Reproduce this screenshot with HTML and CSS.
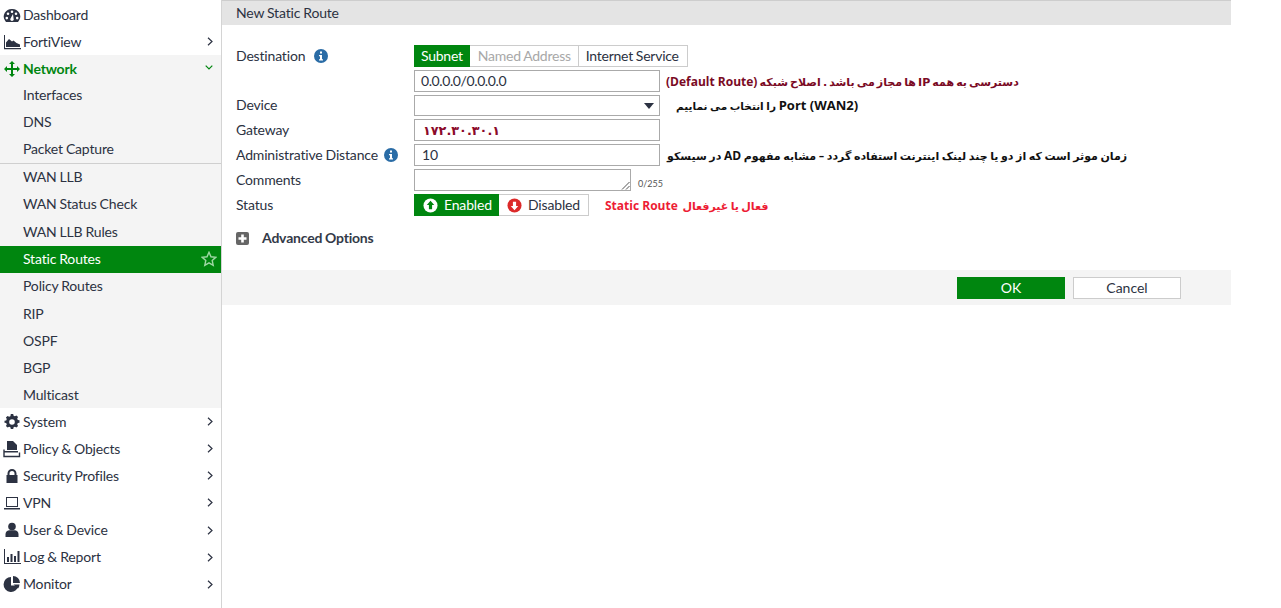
FILE: index.html
```html
<!DOCTYPE html>
<html lang="en">
<head>
<meta charset="utf-8">
<title>New Static Route</title>
<link rel="stylesheet" href="styles.css">
</head>
<body>
<div class="app">
  <nav class="sidebar">
    <a class="item"><svg class="ico" viewBox="0 0 18 18"><path fill-rule="evenodd" d="M9 3a8 7.500 0 0 0-7 11.500L3 16h12l1-1.500A8 7.500 0 0 0 9 3zM5 6.500a1.300 1.300 0 1 1 0 2.600 1.300 1.300 0 0 1 0-2.600zM9 4.500a1.300 1.300 0 1 1 0 2.600 1.300 1.300 0 0 1 0-2.600zm4 2a1.300 1.300 0 1 1 0 2.600 1.300 1.300 0 0 1 0-2.600zM3.800 10.800a1.300 1.300 0 1 1 0 2.600 1.300 1.300 0 0 1 0-2.600zm10.400 0a1.300 1.300 0 1 1 0 2.600 1.300 1.300 0 0 1 0-2.600zM10 8l.6 4.800a1.700 1.700 0 1 1-3.200 0z"/></svg>Dashboard</a>
    <a class="item"><svg class="ico" viewBox="0 0 18 18"><path d="M1 2h1v13h16v1.200H1z"/><path d="M3 14V9.500l3-3.500 3 2.500 1.500-1 3 2.500 3.500 1.500v2.500z"/></svg>FortiView<svg class="chev" viewBox="0 0 6 9"><path d="M1 .7L5 4.500 1 8.300"/></svg></a>
    <div class="group">
      <a class="item head"><svg class="ico" viewBox="0 0 18 18"><path d="M9 1l3 3h-2v4h4V6l3 3-3 3v-2h-4v4h2l-3 3-3-3h2v-4H4v2L1 9l3-3v2h4V4H6z"/></svg>Network<svg class="chev down" viewBox="0 0 8 5"><path d="M.7 .7L4 4l3.300-3.300"/></svg></a>
      <a class="item sub">Interfaces</a>
      <a class="item sub">DNS</a>
      <a class="item sub last">Packet Capture</a>
      <div class="divider"></div>
      <a class="item sub">WAN LLB</a>
      <a class="item sub">WAN Status Check</a>
      <a class="item sub pre">WAN LLB Rules</a>
      <a class="item sub active">Static Routes<svg class="star" viewBox="0 0 16 16"><path d="M8 1.300l2 4.500 4.800.5-3.600 3.200 1 4.800L8 11.900l-4.200 2.400 1-4.800L1.200 6.300 6 5.800z"/></svg></a>
      <a class="item sub pre">Policy Routes</a>
      <a class="item sub">RIP</a>
      <a class="item sub">OSPF</a>
      <a class="item sub">BGP</a>
      <a class="item sub short">Multicast</a>
    </div>
    <a class="item"><svg class="ico" viewBox="0 0 18 18"><path fill-rule="evenodd" d="M7.800 2.500h2.400l.4 1.700 1.300.6 1.500-.9 1.700 1.700-.9 1.500.6 1.300 1.700.4v2.400l-1.700.4-.6 1.300.9 1.500-1.700 1.700-1.500-.9-1.300.6-.4 1.700H7.800l-.4-1.700-1.300-.6-1.500.9-1.700-1.700.9-1.500-.6-1.300-1.700-.4V9.300l1.700-.4.6-1.300-.9-1.500 1.700-1.700 1.500.9 1.300-.6zM9 7.700a2.800 2.800 0 1 0 0 5.600 2.800 2.800 0 0 0 0-5.600z" transform="translate(0 -1.500)"/></svg>System<svg class="chev" viewBox="0 0 6 9"><path d="M1 .7L5 4.500 1 8.300"/></svg></a>
    <a class="item"><svg class="ico" viewBox="0 0 18 18"><path d="M4 1h6l4 4v5H4z"/><path fill="none" stroke="currentColor" stroke-width="1.400" d="M1 9.500v7h15.500v-4"/><path d="M1 11h14v1.500H1z"/></svg>Policy &amp; Objects<svg class="chev" viewBox="0 0 6 9"><path d="M1 .7L5 4.500 1 8.300"/></svg></a>
    <a class="item"><svg class="ico" viewBox="0 0 18 18"><path fill-rule="evenodd" d="M9 2a4.500 4.500 0 0 0-4.500 4.500V8H3.500v8h11V8h-1V6.500A4.500 4.500 0 0 0 9 2zm0 2a2.500 2.500 0 0 1 2.500 2.500V8h-5V6.500A2.500 2.500 0 0 1 9 4z"/></svg>Security Profiles<svg class="chev" viewBox="0 0 6 9"><path d="M1 .7L5 4.500 1 8.300"/></svg></a>
    <a class="item"><svg class="ico" viewBox="0 0 18 18"><path fill-rule="evenodd" d="M3 3h12v10H3zm1 1v8h10V4zM1 14h16v1.500H1z"/></svg>VPN<svg class="chev" viewBox="0 0 6 9"><path d="M1 .7L5 4.500 1 8.300"/></svg></a>
    <a class="item"><svg class="ico" viewBox="0 0 18 18"><circle cx="9" cy="5.500" r="3.800"/><path d="M2.500 16v-3c0-2.500 2-3.800 4-3.800h5c2 0 4 1.300 4 3.800v3z"/></svg>User &amp; Device<svg class="chev" viewBox="0 0 6 9"><path d="M1 .7L5 4.500 1 8.300"/></svg></a>
    <a class="item"><svg class="ico" viewBox="0 0 18 18"><path d="M1 1h1v14h16v1H1zM4 9h2v5H4zM7.500 6h2v8h-2zM11 8h2v6h-2zM14.500 3h2v11h-2z"/></svg>Log &amp; Report<svg class="chev" viewBox="0 0 6 9"><path d="M1 .7L5 4.500 1 8.300"/></svg></a>
    <a class="item"><svg class="ico" viewBox="0 0 18 18"><path d="M8 2a7.500 7.500 0 1 0 7.500 8.500H8z"/><path d="M10 1a7 7 0 0 1 7 7h-7z"/><path d="M10.500 9.500h6a7 7 0 0 1-1.500 4z"/></svg>Monitor<svg class="chev" viewBox="0 0 6 9"><path d="M1 .7L5 4.500 1 8.300"/></svg></a>
  </nav>
  <main class="main">
    <header class="title">New Static Route</header>
    <form class="form">
      <div class="row">
        <div class="label">Destination<svg class="info gap1" viewBox="0 0 14 14"><circle cx="7" cy="7" r="7"/><path class="i" d="M6 2.500h2v2H6zM5 6h3v4.200h1v1.300H5v-1.300h1V7.300H5z"/></svg></div>
        <div class="tabs"><span class="tab on">Subnet</span><span class="tab dim">Named Address</span><span class="tab svc">Internet Service</span></div>
      </div>
      <div class="row">
        <div class="label"></div>
        <div class="input addr">0.0.0.0/0.0.0.0</div>
        <div class="note n1" dir="rtl">دسترسی به همه IP ها مجاز می باشد . اصلاح شبکه <span class="lat">(Default Route)</span></div>
      </div>
      <div class="row device">
        <div class="label">Device</div>
        <div class="input select"><svg class="caret" viewBox="0 0 10 6"><path d="M0 0h10L5 6z"/></svg></div>
        <div class="note n2" dir="rtl"><span class="lat big">Port (WAN2)</span> را انتخاب می نماییم</div>
      </div>
      <div class="row">
        <div class="label">Gateway</div>
        <div class="input gw">۱۷۲.۳۰.۳۰.۱</div>
      </div>
      <div class="row">
        <div class="label">Administrative Distance<svg class="info gap2" viewBox="0 0 14 14"><circle cx="7" cy="7" r="7"/><path class="i" d="M6 2.500h2v2H6zM5 6h3v4.200h1v1.300H5v-1.300h1V7.300H5z"/></svg></div>
        <div class="input">10</div>
        <div class="note n3" dir="rtl">زمان موثر است که از دو یا چند لینک اینترنت استفاده گردد – مشابه مفهوم <span class="lat">AD</span> در سیسکو</div>
      </div>
      <div class="row">
        <div class="label">Comments</div>
        <div class="textarea"><svg class="grip" viewBox="0 0 9 9"><path d="M8.500 1L1 8.500M8.500 5L5 8.500"/></svg></div>
        <span class="count">0/255</span>
      </div>
      <div class="row">
        <div class="label">Status</div>
        <div class="tabs">
          <span class="tab on stat en"><svg class="sico" viewBox="0 0 16 16"><circle cx="8" cy="8" r="7.500" fill="#fff"/><path fill="#00860f" d="M8 3l4 4.500H9.700V12H6.300V7.500H4z"/></svg>Enabled</span>
          <span class="tab stat dis"><svg class="sico" viewBox="0 0 16 16"><circle cx="8" cy="8" r="7.500" fill="#dc2a2a"/><path fill="#fff" d="M8 13L4 8.500h2.300V4h3.400v4.500H12z"/></svg>Disabled</span>
        </div>
        <div class="note n4" dir="rtl">فعال یا غیرفعال&nbsp; <span class="lat">Static Route</span></div>
      </div>
      <div class="advanced"><svg class="plus" viewBox="0 0 13 13"><rect width="13" height="13" rx="2" fill="#666"/><path fill="#fff" d="M5.200 2.500h2.600v2.700h2.700v2.600H7.800v2.700H5.200V7.800H2.500V5.200h2.700z"/></svg>Advanced Options</div>
    </form>
    <footer class="footer">
      <button class="btn ok" type="button">OK</button>
      <button class="btn" type="button">Cancel</button>
    </footer>
  </main>
</div>
</body>
</html>
```

FILE: styles.css
```css
* { box-sizing: border-box; }
html, body { margin: 0; height: 100%; background: #fff; overflow: hidden; }
body { font: 14px/20px Lato, "Liberation Sans", sans-serif; color: #2c3242; letter-spacing: -0.17px; word-spacing: -0.4px; }

.app { display: flex; height: 608px; width: 1281px; }

.sidebar {
  width: 222px; flex: none; border-right: 1px solid #d4d4d4; padding-top: 1px;
}
.item {
  display: flex; align-items: center; height: 27.100px; position: relative;
  white-space: nowrap; color: #2c3242;
}
.ico { width: 18px; height: 18px; margin: 0 2px 0 3px; fill: #2c3242; color: #2c3242; flex: none; }
.chev { position: absolute; right: 8px; top: 9px; width: 6px; height: 9px; fill: none; stroke: #2c3242; stroke-width: 1.200; }
.chev.down { right: 8px; top: 10px; width: 8px; height: 5px; stroke: #00860f; }
.group { background: #f4f4f4; }
.head { color: #00860f; font-weight: 700; margin-bottom: -0.700px; }
.head .ico { fill: #00860f; }
.sub { padding-left: 23px; }
.last { height: 27px; }
.pre { margin-bottom: 0.600px; }
.divider { height: 1px; background: #cfcfcf; }
.active { background: #00860f; color: #fff; height: 27px; }
.star { position: absolute; right: 4px; top: 5px; width: 16px; height: 16px; fill: none; stroke: #9fd8a5; stroke-width: 1.400; }
.short { height: 26.500px; }

.main { width: 1009px; flex: none; }
.title {
  height: 25px; background: #e4e4e4; border-top: 1px solid #cdcdcd;
  padding: 2px 0 0 14px; line-height: 20px;
}
.form { padding: 20px 0 0 14px; height: 245px; }
.row { display: flex; align-items: center; height: 22px; margin-bottom: 3px; }
.device { height: 21px; align-items: flex-start; }
.label { width: 178px; flex: none; display: flex; align-items: center; }
.info { width: 14px; height: 14px; fill: #2a6ca6; flex: none; }
.info .i { fill: #fff; }
.gap1 { margin-left: 9px; }
.gap2 { margin-left: 6px; }

.tabs { display: flex; height: 22px; }
.tab {
  display: flex; align-items: center; height: 22px; padding: 0 7px;
  border: 1px solid #ccc; border-left-width: 0; background: #fff; letter-spacing: -0.25px;
}
.tab.on { background: #00860f; border-color: #00860f; color: #fff; border-left-width: 1px; padding: 0 6px; }
.tab.dim { color: #a8a8a8; padding-left: 8px; }
.tab.svc { padding-right: 8px; }

.input {
  width: 246px; height: 22px; border: 1px solid #aaa; padding-left: 7px; flex: none;
  display: flex; align-items: center; position: relative;
}
.addr { letter-spacing: -0.4px; padding-left: 6px; }
.select { height: 21px; }
.caret { position: absolute; right: 5px; top: 7px; width: 10px; height: 6px; fill: #2c3242; }
.gw { color: #8b0a2a; font: bold 12.800px "DejaVu Sans", sans-serif; letter-spacing: 0; direction: ltr; padding-left: 8px; }
.textarea { width: 217px; height: 22px; border: 1px solid #aaa; flex: none; position: relative; }
.grip { position: absolute; right: 0; bottom: 0; width: 9px; height: 9px; fill: none; stroke: #555; stroke-width: 1; }
.count { font-size: 9px; line-height: 12px; color: #555; margin: 7px 0 0 7px; letter-spacing: 0; }

.tab.stat { padding: 0 7px 0 8px; letter-spacing: -0.17px; }
.en { width: 85px; }
.dis { width: 90px; color: #2c3242; }
.sico { width: 15px; height: 15px; margin-right: 6px; flex: none; }

.note { font: bold 11px "DejaVu Sans", sans-serif; letter-spacing: 0; word-spacing: -1.700px; white-space: nowrap; flex: none; }
.lat { font: bold 12px "Open Sans", "DejaVu Sans", sans-serif; word-spacing: 0; }
.lat.big { font-size: 13px; }
.n1 { color: #7a0a24; margin-left: 6px; }
.n2 { color: #111; margin: 1px 0 0 16px; font-size: 10.500px; word-spacing: -1px; }
.n3 { color: #111; margin-left: 7px; word-spacing: -1.250px; }
.n4 { color: #ed1c34; margin-left: 16px; word-spacing: -1.500px; }

.advanced { display: flex; align-items: center; font-weight: 700; letter-spacing: -0.2px; margin-top: 11px; height: 22px; color: #333a48; }
.plus { width: 13px; height: 13px; margin-right: 13px; }

.footer {
  height: 35px; background: #f4f4f4; display: flex; justify-content: flex-end;
  align-items: center; gap: 8px; padding-right: 50px;
}
.btn {
  width: 108px; height: 22px; padding: 0; background: #fff; border: 1px solid #ccc;
  font: 14px Lato, sans-serif; color: #2c3242;
}
.ok { background: #00860f; border-color: #00860f; color: #fff; }
```
